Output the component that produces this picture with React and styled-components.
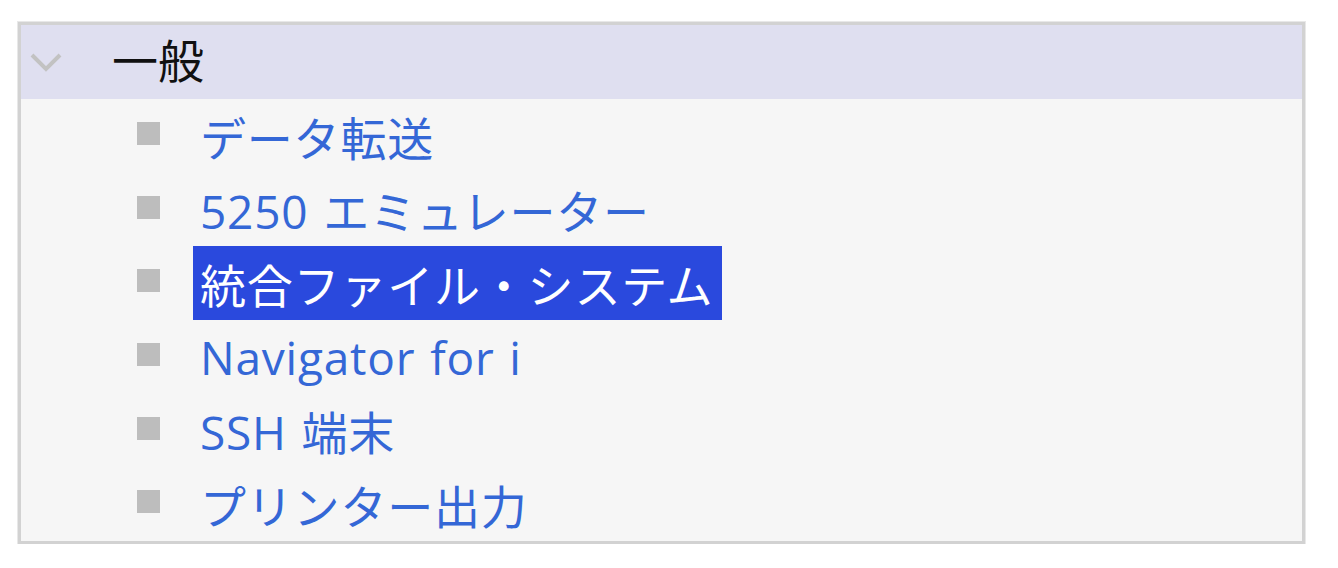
import styled, { createGlobalStyle } from "styled-components";

const GlobalStyle = createGlobalStyle`
  body {
    margin: 0;
    background: #ffffff;
    font-family: "Open Sans", "Noto Sans CJK JP", sans-serif;
  }
`;

const Page = styled.div`
  padding: 22px 0 0 18px;
`;

const Panel = styled.div`
  width: 1281px;
  border: 3px solid #d2d2d2;
  box-shadow: 0 0 0 1px #e8e8e8;
  background: #f6f6f6;
`;

const Header = styled.div`
  display: flex;
  align-items: center;
  height: 74px;
  background: #dfdff0;
  padding-left: 9px;
`;

const Chevron = styled.svg`
  width: 32px;
  height: 20px;
  margin-right: 50px;
`;

const Title = styled.span`
  font-size: 46px;
  color: #111111;
  line-height: 1;
  margin-top: -4px;
`;

const List = styled.ul`
  list-style: none;
  margin: 0;
  padding: 0;
`;

const Row = styled.li`
  display: flex;
  align-items: center;
  height: 73.6px;
  padding-left: 116px;
`;

const Bullet = styled.span`
  width: 23px;
  height: 23px;
  background: #bdbdbd;
  margin-right: 33px;
  margin-top: -4px;
`;

const Label = styled.a`
  display: flex;
  align-items: center;
  height: 74px;
  padding: 0 9px 0 7px;
  font-size: 46px;
  letter-spacing: 0.8px;
  word-spacing: 2px;
  color: ${(p) => (p.$selected ? "#ffffff" : "#3467d6")};
  background: ${(p) => (p.$selected ? "#2a49dd" : "transparent")};
  text-decoration: none;
  white-space: nowrap;
`;

const items = [
  "データ転送",
  "5250 エミュレーター",
  "統合ファイル・システム",
  "Navigator for i",
  "SSH 端末",
  "プリンター出力",
];

export default function App() {
  return (
    <>
      <GlobalStyle />
      <Page>
        <Panel>
          <Header>
            <Chevron viewBox="0 0 32 20">
              <polyline
                points="2,3 16,17 30,3"
                fill="none"
                stroke="#c2c2c2"
                strokeWidth="4"
              />
            </Chevron>
            <Title>一般</Title>
          </Header>
          <List>
            {items.map((t, i) => (
              <Row key={t}>
                <Bullet />
                <Label href="#" $selected={i === 2}>
                  {t}
                </Label>
              </Row>
            ))}
          </List>
        </Panel>
      </Page>
    </>
  );
}
